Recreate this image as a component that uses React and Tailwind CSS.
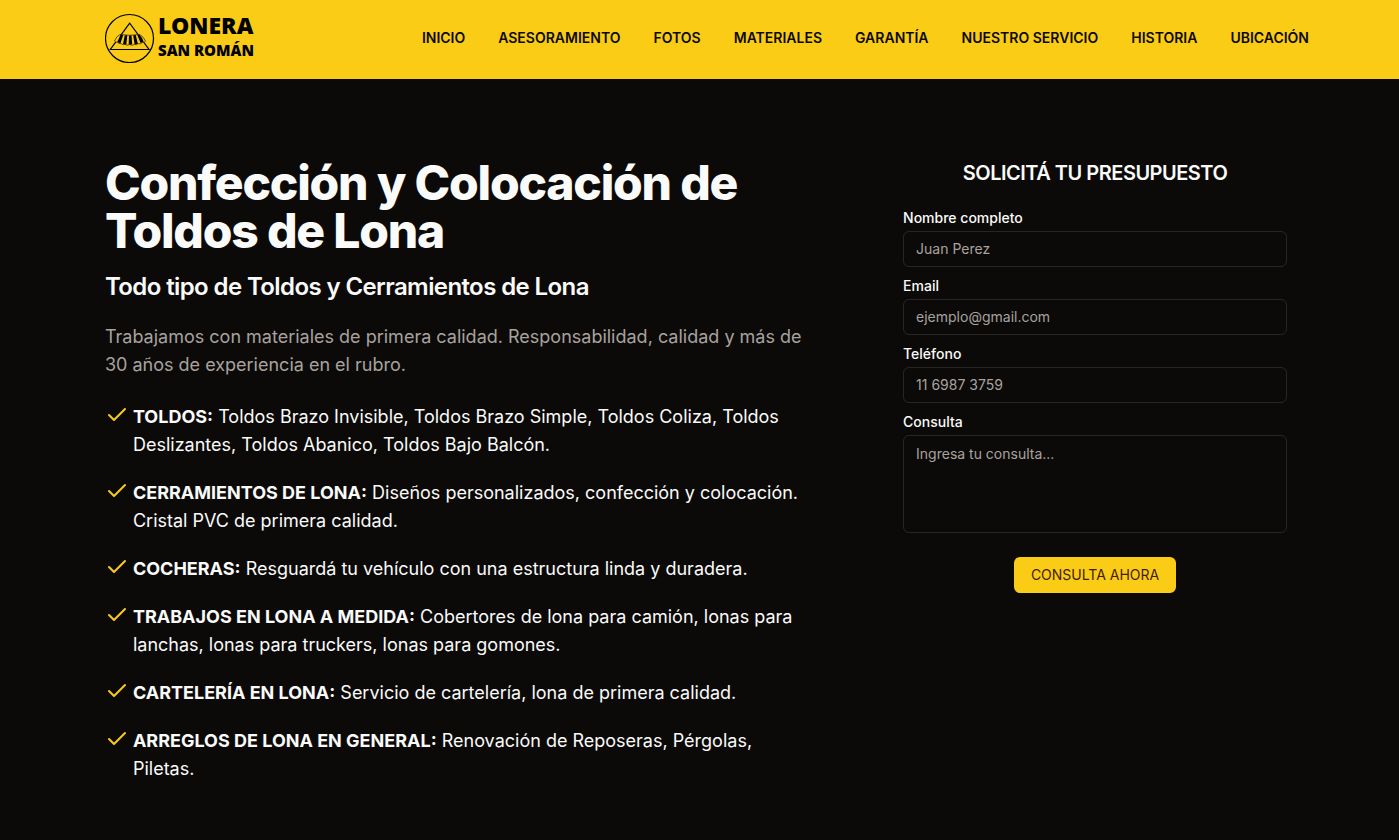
import { Check } from 'lucide-react'

const links = ['INICIO', 'ASESORAMIENTO', 'FOTOS', 'MATERIALES', 'GARANTÍA', 'NUESTRO SERVICIO', 'HISTORIA', 'UBICACIÓN']

const services = [
  { title: 'TOLDOS:', text: 'Toldos Brazo Invisible, Toldos Brazo Simple, Toldos Coliza, Toldos Deslizantes, Toldos Abanico, Toldos Bajo Balcón.' },
  { title: 'CERRAMIENTOS DE LONA:', text: 'Diseños personalizados, confección y colocación. Cristal PVC de primera calidad.' },
  { title: 'COCHERAS:', text: 'Resguardá tu vehículo con una estructura linda y duradera.' },
  { title: 'TRABAJOS EN LONA A MEDIDA:', text: 'Cobertores de lona para camión, lonas para lanchas, lonas para truckers, lonas para gomones.' },
  { title: 'CARTELERÍA EN LONA:', text: 'Servicio de cartelería, lona de primera calidad.' },
  { title: 'ARREGLOS DE LONA EN GENERAL:', text: 'Renovación de Reposeras, Pérgolas, Piletas.' },
]

const fields = [
  { id: 'nombre', label: 'Nombre completo', type: 'text', placeholder: 'Juan Perez' },
  { id: 'email', label: 'Email', type: 'email', placeholder: 'ejemplo@gmail.com' },
  { id: 'telefono', label: 'Teléfono', type: 'tel', placeholder: '11 6987 3759' },
]

function Logo() {
  return (
    <a href="#inicio" className="flex shrink-0 items-center gap-[3px] text-black">
      <svg viewBox="0 0 50 50" className="size-[50px]" fill="none" stroke="currentColor" aria-hidden="true">
        <circle cx="24.5" cy="25.5" r="24" strokeWidth="1.2" />
        {/* triangle behind the awning */}
        <path d="M24.7 10.2 5.3 36.5H44z" strokeWidth="1.2" />
        {/* awning */}
        <path d="M15 21.500q9.500 1.500 19.500 0 4 2 6 6.500-1 2-3.200 1.500-1.500 2-4 1.200-1.700 1.500-4 .8-2 1.500-4.600.1-2.500 1.300-4.600-.2-2.200.9-4-.8-2.600.4-3.600-1.500-2.200.3-3-1.100 2-5 5.500-6.500z" fill="#facc15" strokeWidth="0.6" />
        <path d="M15.600 21.600l2.600.4-2.700 8.300-3.300-1zM19.800 22.200h2.500l-1 9.200-3.300-.5zM24 22.400h2.500l.7 9h-3.500zM28.200 22.200l2.500-.2 2.200 8.700-3.300.7zM32.300 21.900l2-.3q3 3 4.400 7.200l-3.100 1.200z" fill="currentColor" stroke="none" />
      </svg>
      <span className="flex flex-col font-['Noto_Sans',sans-serif] font-black">
        <span className="text-[23px] leading-6">LONERA</span>
        <span className="text-[15px] leading-[26px]">SAN ROMÁN</span>
      </span>
    </a>
  )
}

export default function App() {
  return (
    <div className="min-h-screen bg-[#0c0a09] font-[Inter,sans-serif] text-[#fafaf9]">
      <header className="flex h-[79px] items-center justify-between bg-[#facc15] pr-[90px] pb-1 pl-[105px]">
        <Logo />
        <nav className="flex gap-[33px]">
          {links.map((link) => (
            <a key={link} href="#" className="text-sm font-semibold whitespace-nowrap text-[#0c0a09]">{link}</a>
          ))}
        </nav>
      </header>

      <main className="mx-auto flex w-[85%] justify-between gap-8 pt-20 pb-14">
        <section className="max-w-[700px]">
          <h1 className="text-5xl leading-12 font-extrabold tracking-tight">Confección y Colocación de Toldos de Lona</h1>
          <h2 className="mt-4 text-2xl font-semibold tracking-tight">Todo tipo de Toldos y Cerramientos de Lona</h2>
          <p className="mt-5 text-lg leading-7 text-[#a8a29e]">
            Trabajamos con materiales de primera calidad. Responsabilidad, calidad y más de 30 años de experiencia en el rubro.
          </p>
          <ul className="mt-6 flex flex-col gap-5">
            {services.map((s) => (
              <li key={s.title} className="flex gap-1">
                <Check className="size-6 shrink-0 text-[#facc15]" />
                <p className="text-lg leading-7"><strong className="font-bold">{s.title}</strong> {s.text}</p>
              </li>
            ))}
          </ul>
        </section>

        <form className="flex w-[398px] shrink-0 flex-col items-center">
          <h3 className="text-xl font-semibold tracking-tight">SOLICITÁ TU PRESUPUESTO</h3>
          <div className="mt-6 flex w-full max-w-sm flex-col gap-3">
            {fields.map((f) => (
              <div key={f.id} className="flex flex-col gap-1.5">
                <label htmlFor={f.id} className="text-sm leading-none font-medium">{f.label}</label>
                <input id={f.id} type={f.type} placeholder={f.placeholder} className="h-9 rounded-md border border-[#292524] bg-transparent px-3 pb-0.5 text-sm placeholder:text-[#a8a29e]" />
              </div>
            ))}
            <div className="flex flex-col gap-1.5">
              <label htmlFor="consulta" className="text-sm leading-none font-medium">Consulta</label>
              <textarea id="consulta" placeholder="Ingresa tu consulta..." className="h-[98px] resize-none rounded-md border border-[#292524] bg-transparent px-3 py-2 text-sm placeholder:text-[#a8a29e]" />
            </div>
          </div>
          <button type="submit" className="mt-6 h-9 rounded-md bg-[#facc15] px-[17px] text-sm text-[#422006]">CONSULTA AHORA</button>
        </form>
      </main>
    </div>
  )
}
